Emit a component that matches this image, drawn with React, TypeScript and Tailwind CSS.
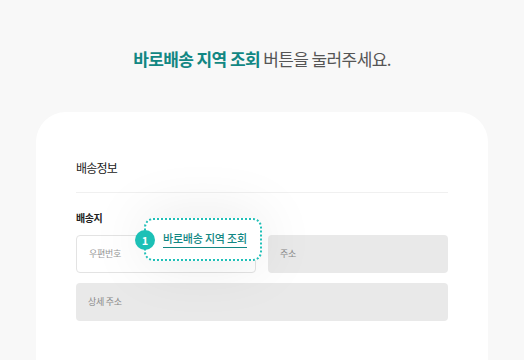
const FONT = "font-['Noto_Sans_CJK_KR','Noto_Sans',sans-serif]";

export default function App() {
  return (
    <div className={`w-[524px] h-[360px] overflow-hidden bg-[#f8f8f8] ${FONT}`}>
      {/* 안내 문구 */}
      <div className="pt-[46px] text-center text-[17px] leading-[26px] tracking-[-0.6px]">
        <span className="font-bold text-[#128783]">바로배송 지역 조회</span>
        <span className="text-[#555]"> 버튼을 눌러주세요.</span>
      </div>

      {/* 카드 */}
      <div className="mt-[40px] ml-[36px] w-[452px] h-[300px] bg-white rounded-[30px] px-[40px] pt-[47px]">
        <div className="text-[12px] leading-[18px] tracking-[-0.8px] text-[#222]">배송정보</div>
        <div className="mt-[15px] h-px bg-[#f0f0f0]" />

        <div className="mt-[18px] text-[10px] font-bold leading-[14px] tracking-[-0.4px] text-[#222]">배송지</div>

        <div className="relative mt-[10px] flex gap-3">
          <div className="flex h-[38px] w-[180px] items-center rounded-[4px] border border-[#e3e3e3] bg-white px-3 text-[9px] tracking-[-0.3px] text-[#999]">
            우편번호
          </div>
          <div className="flex h-[38px] flex-1 items-center rounded-[4px] bg-[#e9e9e9] px-3 text-[9px] tracking-[-0.3px] text-[#888]">
            주소
          </div>

          {/* 강조 버튼 */}
          <div className="absolute left-[68px] top-[-17px] flex h-[43px] w-[118px] items-center rounded-[9px] border-2 border-dotted border-[#1fbfb7] bg-white pl-[17px] shadow-[0_0_60px_rgba(0,0,0,0.1)]">
            <span className="border-b border-[#128783] pb-[1px] text-[11px] font-medium leading-[15px] tracking-[-0.2px] text-[#128783]">
              바로배송 지역 조회
            </span>
            <div className="absolute left-[-11px] top-[10px] flex h-[20px] w-[20px] items-center justify-center rounded-full bg-[#1cc0b6] text-[11px] font-bold text-white">
              1
            </div>
          </div>
        </div>

        <div className="mt-[10px] flex h-[38px] items-center rounded-[4px] bg-[#e9e9e9] px-3 text-[9px] tracking-[-0.3px] text-[#888]">
          상세 주소
        </div>
      </div>
    </div>
  );
}
